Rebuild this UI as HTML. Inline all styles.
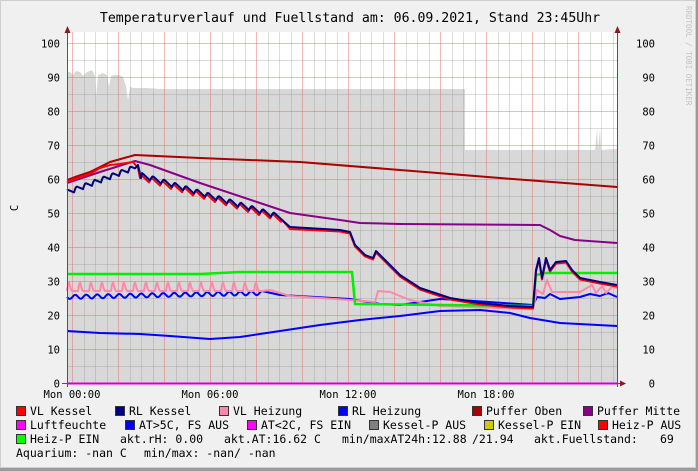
<!DOCTYPE html>
<html><head><meta charset="utf-8"><style>
html,body{margin:0;padding:0;background:#f0f0f0;}
svg{display:block;}
text{font-family:"DejaVu Sans Mono","Liberation Mono",monospace;white-space:pre;}
</style></head><body>
<svg id="s" width="698" height="471" xmlns="http://www.w3.org/2000/svg" xml:space="preserve">
<rect x="0" y="0" width="698" height="471" fill="#f0f0f0"/>
<rect x="0.5" y="0.5" width="695" height="467" fill="none" stroke="#cfcfcf" stroke-width="1"/>
<rect x="696" y="0" width="2" height="471" fill="#9a9a9a"/>
<rect x="0" y="468" width="698" height="3" fill="#9a9a9a"/>
<rect x="67" y="32" width="550" height="351" fill="#ffffff"/>
<polygon fill="#d8d8d8" points="67,383 67,72 70,72 73,75 76,71 80,72 83,76 87,72 92,70 95,76 96,97 98,75 103,73 107,75 109,87 111,76 115,75 119,75 123,77 126,86 128,100 130,87 133,88 147,88 160,89 300,89 465,89 465,150 595,150 597,128 598,150 600,128 601,150 617,149 617,383"/>
<g id="grid"></g>
<g id="lines" fill="none" stroke-width="2" stroke-linejoin="round"></g>
<line x1="67" y1="383.5" x2="617" y2="383.5" stroke="#e000e0" stroke-width="2"/>
<line x1="67.5" y1="30" x2="67.5" y2="387" stroke="#555" stroke-width="1"/>
<line x1="617.5" y1="30" x2="617.5" y2="387" stroke="#555" stroke-width="1"/>
<line x1="62" y1="383.5" x2="622" y2="383.5" stroke="#555" stroke-width="1"/>
<polygon points="64.5,33 70.5,33 67.5,26" fill="#8b1a1a"/>
<polygon points="614.5,33 620.5,33 617.5,26" fill="#8b1a1a"/>
<polygon points="620,380.5 620,386.5 626,383.5" fill="#8b1a1a"/>
<text x="350" y="22" font-size="13.2" text-anchor="middle" fill="#000">Temperaturverlauf und Fuellstand am: 06.09.2021, Stand 23:45Uhr</text>
<text transform="translate(686,6) rotate(90)" font-size="7.5" fill="#c4c4c4">RRDTOOL / TOBI OETIKER</text>
<text transform="translate(18,208) rotate(-90)" font-size="10.5" text-anchor="middle">C</text>
<g id="ylab" font-size="10.5" fill="#000"></g>
<g font-size="10.5" text-anchor="middle">
<text x="72" y="398">Mon 00:00</text>
<text x="210" y="398">Mon 06:00</text>
<text x="348" y="398">Mon 12:00</text>
<text x="486" y="398">Mon 18:00</text>
</g>
<g id="leg" font-size="11.5" fill="#000"></g>
</svg>
<script>
var NS="http://www.w3.org/2000/svg";
function el(p,t,a,txt){var e=document.createElementNS(NS,t);for(var k in a)e.setAttribute(k,a[k]);if(txt!==undefined)e.textContent=txt;p.appendChild(e);return e;}
var g=document.getElementById('grid');
function Y(v){return 383.3-3.4*v;}
for(var v=5;v<=100;v+=5){var y=Math.round(Y(v))+0.5;el(g,'line',{x1:67,x2:617,y1:y,y2:y,stroke:(v%10==0)?'rgba(230,100,100,0.45)':'rgba(140,140,140,0.3)','stroke-width':1});}
for(var i=0;i<48;i++){var x=72.3+11.5*i;if(x>616)break;var r=(i%4==0);el(g,'line',{x1:Math.round(x)+0.5,x2:Math.round(x)+0.5,y1:32,y2:383,stroke:r?'rgba(230,100,100,0.45)':'rgba(140,140,140,0.3)','stroke-width':1});}
var yl=document.getElementById('ylab');
for(var v=0;v<=100;v+=10){var y=Y(v)+4;el(yl,'text',{x:60,y:y,'text-anchor':'end'},String(v));el(yl,'text',{x:655,y:y,'text-anchor':'end'},String(v));}
var L=document.getElementById('lines');
function pl(pts,c,w){el(L,'polyline',{points:pts.map(function(p){return p[0]+','+p[1]}).join(' '),stroke:c,'stroke-width':w||2});}
function saw(x0,x1,y0,y1,per,amp,off){var o=[];for(var x=x0;x<=x1;x++){var t=(x-x0)/(x1-x0);var ph=((x-x0+(off||0))%per)/per;var d=ph<0.3?-amp*Math.sin(ph/0.3*1.5708):-amp*(1-(ph-0.3)/0.7);o.push([x,(y0+(y1-y0)*t+d).toFixed(1)]);}return o;}
function spk(x0,x1,y,per,amp){var o=[];for(var x=x0;x<=x1;x++){var ph=((x-x0)%per)/per;var d=ph<0.15?-amp*(ph/0.15):(ph<0.4?-amp*(1-(ph-0.15)/0.25):0);o.push([x,(y+d).toFixed(1)]);}return o;}
function wig(x0,x1,y0,y1,per,amp){var o=[];for(var x=x0;x<=x1;x++){var t=(x-x0)/(x1-x0);o.push([x,(y0+(y1-y0)*t+amp*Math.sin((x-x0)/per*6.283)).toFixed(1)]);}return o;}
pl([[67,331],[100,333],[140,334],[170,336],[210,339],[240,337],[280,331],[320,325],[360,320],[400,316],[440,311],[480,310],[510,313],[530,318],[560,323],[617,326]],'#0000ff');
pl(wig(67,262,297,293,11,2).concat([[280,295],[350,299],[380,304],[400,305],[420,302],[440,299],[460,300],[533,305],[537,297],[545,298],[550,294],[560,299],[580,297],[590,294],[600,296],[608,293],[617,297]]),'#0000ff');
pl(spk(67,262,291,11,10).concat([[270,290],[290,296],[350,300],[375,302],[378,291],[390,292],[410,300],[440,306],[533,309],[537,290],[543,294],[547,280],[552,292],[562,292],[580,292],[592,285],[596,293],[602,286],[606,293],[612,287],[617,288]]),'#ff88aa');
pl([[67,274],[200,274],[240,272],[300,272],[352,272],[355,304],[533,306],[536,275],[545,273],[617,273]],'#00ee00',2.5);
pl([[67,183],[100,172],[135,161],[150,165],[200,183],[260,203],[290,213],[340,220],[360,223],[400,224],[540,225],[550,230],[560,236],[575,240],[617,243]],'#880088');
pl([[67,180],[75,177],[90,172],[110,162],[135,155],[200,158],[300,162],[400,170],[500,178],[617,187]],'#aa0000');
var tail=[[340,230],[350,232],[355,245],[365,255],[373,258],[376,251],[385,260],[400,275],[420,288],[450,298],[480,303],[510,306],[533,307],[536,270],[539,258],[542,278],[546,258],[550,270],[556,262],[566,261],[572,270],[580,278],[600,282],[617,285]];
pl([[67,182],[80,177],[90,174],[100,168],[110,165],[120,164],[133,162],[138,168],[140,178]].concat(saw(141,282,180,222,11,5,3)).concat([[290,229]]).concat(tail.map(function(p){return [p[0],p[1]+1.5]})),'#ff0000');
pl(saw(67,135,195,170,9,5,2).concat([[138,165],[141,178]]).concat(saw(142,282,178,220,11,5,3)).concat([[290,227]]).concat(tail),'#000080');
var lg=document.getElementById('leg');
function item(x,y,c,t){if(c){el(lg,'rect',{x:x+0.5,y:y-8.5,width:9,height:9,fill:c,stroke:'#333','stroke-width':1});el(lg,'text',{x:x+14,y:y},t);}else el(lg,'text',{x:x,y:y},t);}
var r1=415,r2=429,r3=443,r4=457;
item(16,r1,'#ff0000','VL Kessel');item(115,r1,'#000080','RL Kessel');item(219,r1,'#ff88aa','VL Heizung');item(338,r1,'#0000ff','RL Heizung');item(472,r1,'#aa0000','Puffer Oben');item(583,r1,'#880088','Puffer Mitte');
item(16,r2,'#ff00ff','Luftfeuchte');item(125,r2,'#0000ff','AT>5C, FS AUS');item(247,r2,'#ff00ff','AT<2C, FS EIN');item(369,r2,'#808080','Kessel-P AUS');item(484,r2,'#cccc00','Kessel-P EIN');item(598,r2,'#ff0000','Heiz-P AUS');
item(16,r3,'#00ff00','Heiz-P EIN');item(120,r3,null,'akt.rH: 0.00');item(224,r3,null,'akt.AT:16.62 C');item(342,r3,null,'min/maxAT24h:12.88');item(472,r3,null,'/21.94');item(534,r3,null,'akt.Fuellstand:');item(660,r3,null,'69');
item(16,r4,null,'Aquarium: -nan C');item(144,r4,null,'min/max: -nan/ -nan');
</script>
</body></html>
